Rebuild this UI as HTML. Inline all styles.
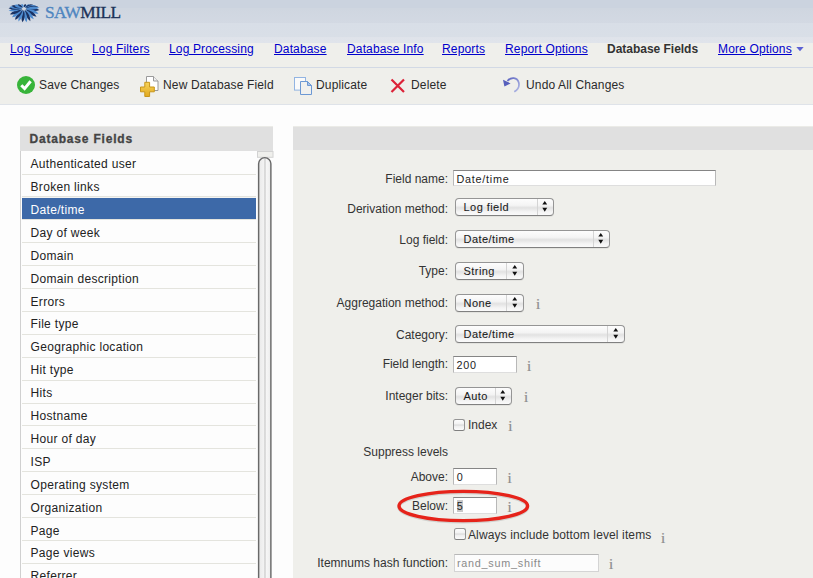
<!DOCTYPE html>
<html><head><meta charset="utf-8">
<style>
*{margin:0;padding:0;box-sizing:border-box}
html,body{width:813px;height:578px;overflow:hidden;background:#fdfdfd;font-family:"Liberation Sans",sans-serif;position:relative}
.abs{position:absolute}
#hdr{left:0;top:0;width:813px;height:43px;background:linear-gradient(#cbd3df 0,#cbd3df 8.5px,#cfd6e0 8.5px,#d3d9e3 23.4px,#d8dee7 23.4px,#d9dfe7 37.4px,#dfe3ea 37.4px,#e0e4eb 43px)}
#nav{left:0;top:43px;width:813px;height:25px;background:#efefeb;border-bottom:1px solid #d2d9e5}
#nav a{position:absolute;top:-1px;letter-spacing:0.15px;font-size:12px;color:#0000cc;text-decoration:underline;white-space:nowrap}
#nav b{position:absolute;top:-1px;letter-spacing:-0.02px;font-size:12px;color:#333;white-space:nowrap}
#tb{left:0;top:68px;width:813px;height:37px;background:#efefeb;border-bottom:1px solid #dfe3e9}
.tbt{position:absolute;top:10px;font-size:12px;color:#2a2a2a;letter-spacing:0.15px;white-space:nowrap}
#lp{left:20px;top:127px;width:253px;height:460px}
#lph{position:absolute;left:0;top:0;width:253px;height:24px;background:#e0e0e0;font-weight:bold;font-size:12px;color:#444;padding:5px 0 0 9.5px;letter-spacing:0.8px;-webkit-text-stroke:0.3px #444}
#list{position:absolute;left:0;top:24px;width:253px;height:440px;background:#fdfdfd;border-left:1px solid #d0d0d0}
.it{position:absolute;left:1px;width:234px;height:22.9px;border-top:1px solid #e4e4de;font-size:12px;color:#222;padding:5.6px 0 0 8.5px;letter-spacing:0.32px;white-space:nowrap;background-clip:padding-box}
.it.first{border-top-color:transparent}
.it.sel{background-color:#3d69a8;color:#fff;box-shadow:inset 0 0.9px 0 #f4f4f2}
#rp{left:293px;top:127px;width:520px;height:451px;background:#efefeb}
#rph{position:absolute;left:0;top:0;width:520px;height:23px;background:#e0e0e0}
.lbl{position:absolute;font-size:12px;color:#333;white-space:nowrap;text-align:right}
.inp{position:absolute;background:#fff;border:1px solid #dedede;border-top-color:#858585;border-left-color:#b8b8b8;border-right-color:#b8b8b8;font-size:10.8px;color:#222;padding:1.8px 0 0 2.5px;white-space:nowrap;letter-spacing:0.75px}
.sel2{position:absolute;height:18px;border:1px solid #959595;border-bottom-color:#808080;border-radius:4px;background:linear-gradient(#fdfdfd,#f4f4f4 40%,#e2e2e2 55%,#f4f4f4 80%,#fafafa);font-size:11px;color:#1a1a1a;padding:2.2px 0 0 7.5px;white-space:nowrap;letter-spacing:0.45px;-webkit-text-stroke:0.06px #1a1a1a;box-shadow:0 1px 0 #e2e2de}
.sel2 .dv{position:absolute;top:0;bottom:0;width:1px;background:#d4d4d4}
.sel2 svg{position:absolute;top:1px}
.info{position:absolute;font-family:"Liberation Serif",serif;font-size:15px;color:#8c8c8c;-webkit-text-stroke:0.2px #8c8c8c}
.cb{position:absolute;width:12px;height:12px;border:1px solid #959595;border-bottom-color:#7f7f7f;border-radius:2.5px;background:linear-gradient(#fdfdfd,#f2f2f2 40%,#d9d9d9 50%,#efefef 62%,#fbfbfb)}
</style></head><body>
<div id="hdr" class="abs">
<svg class="abs" style="left:6px;top:2px" width="36" height="24" viewBox="0 0 36 24">
<g><path d="M19.79 6.73Q27.97 10.53 33.42 7.98Q28.52 4.48 19.79 6.73Z" fill="#1b3262"/><path d="M19.68 7.06Q26.64 12.68 32.50 11.48Q28.62 6.93 19.68 7.06Z" fill="#4d8bcf"/><path d="M19.46 7.36Q24.69 14.43 30.58 14.66Q28.02 9.34 19.46 7.36Z" fill="#1b3262"/><path d="M19.14 7.61Q22.25 15.64 27.81 17.28Q26.78 11.58 19.14 7.61Z" fill="#4d8bcf"/><path d="M18.74 7.79Q19.51 16.20 24.37 19.18Q24.96 13.50 18.74 7.79Z" fill="#1b3262"/><path d="M18.29 7.88Q16.67 16.07 20.50 20.22Q22.65 15.00 18.29 7.88Z" fill="#4d8bcf"/><path d="M17.82 7.89Q13.95 15.27 16.45 20.33Q19.99 15.94 17.82 7.89Z" fill="#1b3262"/><path d="M17.36 7.82Q11.55 13.90 12.51 19.51Q17.16 16.23 17.36 7.82Z" fill="#4d8bcf"/><path d="M16.95 7.66Q9.60 12.06 8.95 17.80Q14.38 15.83 16.95 7.66Z" fill="#1b3262"/><path d="M16.61 7.42Q8.21 9.89 6.00 15.34Q11.85 14.77 16.61 7.42Z" fill="#4d8bcf"/><path d="M16.36 7.13Q7.46 7.51 3.87 12.27Q9.77 13.13 16.36 7.13Z" fill="#1b3262"/><path d="M16.22 6.81Q7.39 5.05 2.70 8.82Q8.29 11.06 16.22 6.81Z" fill="#4d8bcf"/><path d="M16.21 6.47Q7.83 3.22 2.58 6.13Q7.68 9.30 16.21 6.47Z" fill="#1b3262"/><path d="M16.32 6.14Q8.66 2.37 3.50 4.94Q8.09 8.42 16.32 6.14Z" fill="#4d8bcf"/><path d="M16.54 5.84Q10.18 1.62 5.42 3.86Q9.11 7.60 16.54 5.84Z" fill="#1b3262"/><path d="M16.86 5.59Q12.37 1.05 8.19 2.96Q10.60 6.87 16.86 5.59Z" fill="#4d8bcf"/><path d="M17.26 5.41Q14.77 1.67 11.63 2.32Q12.77 5.32 17.26 5.41Z" fill="#1b3262"/><path d="M17.71 5.32Q18.08 2.09 15.50 1.96Q14.60 4.38 17.71 5.32Z" fill="#4d8bcf"/><path d="M18.18 5.31Q20.96 3.99 19.55 1.92Q17.10 2.43 18.18 5.31Z" fill="#1b3262"/><path d="M18.64 5.38Q22.78 5.15 23.49 2.20Q20.50 1.67 18.64 5.38Z" fill="#4d8bcf"/><path d="M19.05 5.54Q25.00 6.71 27.05 2.78Q23.02 0.96 19.05 5.54Z" fill="#1b3262"/><path d="M19.39 5.78Q26.57 7.42 30.00 3.62Q25.36 1.46 19.39 5.78Z" fill="#4d8bcf"/><path d="M19.64 6.07Q27.72 8.22 32.13 4.67Q27.05 2.18 19.64 6.07Z" fill="#1b3262"/><path d="M19.78 6.39Q28.28 9.09 33.30 5.84Q28.04 3.01 19.78 6.39Z" fill="#4d8bcf"/></g>
</svg>
<div class="abs" style="left:45px;top:2px;font-family:'Liberation Serif',serif;font-size:17.7px;white-space:nowrap;letter-spacing:-0.6px;-webkit-text-stroke:0.35px;transform-origin:0 0;transform:scaleX(0.98)"><span style="color:#4f86c0">SAW</span><span style="color:#1d3358">MILL</span></div>
</div>
<div id="nav" class="abs">
<a style="left:10px">Log Source</a>
<a style="left:92px">Log Filters</a>
<a style="left:169px">Log Processing</a>
<a style="left:274px">Database</a>
<a style="left:347px">Database Info</a>
<a style="left:442px">Reports</a>
<a style="left:505px">Report Options</a>
<b style="left:607px">Database Fields</b>
<a style="left:718px">More Options</a>
<svg class="abs" style="left:795.5px;top:3.8px" width="9" height="5"><path d="M0.3 0H7.7L4 4.3Z" fill="#5c62d4"/></svg>
</div>
<div id="tb" class="abs">
<svg class="abs" style="left:16px;top:7px" width="20" height="20" viewBox="0 0 20 20"><circle cx="10" cy="10" r="9" fill="#38b43a"/><path d="M5.3 10.2L8.6 13.6L14.6 6.2" stroke="#fff" stroke-width="3" fill="none" stroke-linecap="butt" stroke-linejoin="miter"/></svg>
<span class="tbt" style="left:39px">Save Changes</span>
<svg class="abs" style="left:139px;top:7px" width="22" height="22" viewBox="0 0 22 22"><path d="M7.5 1.5H14.5L19 6V15.5H7.5Z" fill="#fff" stroke="#9a9a9a" stroke-width="1"/><path d="M14.5 1.5V6H19" fill="#eee" stroke="#9a9a9a"/><defs><linearGradient id="pg" x1="0" y1="0" x2="0" y2="1"><stop offset="0" stop-color="#f7d35a"/><stop offset="1" stop-color="#e2a91e"/></linearGradient></defs><path d="M5.8 7.3H10.6V12H15.3V16.8H10.6V21.5H5.8V16.8H1.5V12H5.8Z" fill="url(#pg)" stroke="#c8961a" stroke-width="1"/></svg>
<span class="tbt" style="left:163px">New Database Field</span>
<svg class="abs" style="left:292px;top:7px" width="22" height="22" viewBox="0 0 22 22"><rect x="2.5" y="2.5" width="11" height="12.6" fill="#fafafa" stroke="#92b4e2"/><path d="M8.5 6.5H15.5L19.5 10.5V19.5H8.5Z" fill="#f0f0ee" stroke="#6c98d4"/><path d="M15.5 6.5V10.5H19.5Z" fill="#a8c2e8" stroke="#6c98d4"/></svg>
<span class="tbt" style="left:316px">Duplicate</span>
<svg class="abs" style="left:389px;top:9px" width="18" height="18" viewBox="0 0 18 18"><path d="M2.5 2.5L15 15M15 2.5L2.5 15" stroke="#dc2238" stroke-width="2.2"/></svg>
<span class="tbt" style="left:411px">Delete</span>
<svg class="abs" style="left:500px;top:7px" width="22" height="22" viewBox="0 0 22 22"><defs><linearGradient id="ug" x1="0" y1="0" x2="1" y2="1"><stop offset="0" stop-color="#5a62c0"/><stop offset="1" stop-color="#b4bce6"/></linearGradient></defs><path d="M7.5 6C10.5 1.8 17.5 1.8 18.8 7.8C19.6 11.6 17.5 15 14.3 16.8" fill="none" stroke="url(#ug)" stroke-width="1.7"/><path d="M3 4.8L4.4 11.6L10.6 8.4Z" fill="#5760bc"/></svg>
<span class="tbt" style="left:526px">Undo All Changes</span>
</div>

<div class="abs" style="left:20px;top:126px;width:253px;height:1px;background:#ebebe7"></div><div class="abs" style="left:293px;top:126px;width:520px;height:1px;background:#ebebe7"></div>
<div id="lp" class="abs">
<div id="lph">Database Fields</div>
<div id="list"><div class="it first" style="top:-0.40px">Authenticated user</div><div class="it" style="top:22.50px">Broken links</div><div class="it sel" style="top:45.40px">Date/time</div><div class="it" style="top:68.30px">Day of week</div><div class="it" style="top:91.20px">Domain</div><div class="it" style="top:114.10px">Domain description</div><div class="it" style="top:137.00px">Errors</div><div class="it" style="top:159.90px">File type</div><div class="it" style="top:182.80px">Geographic location</div><div class="it" style="top:205.70px">Hit type</div><div class="it" style="top:228.60px">Hits</div><div class="it" style="top:251.50px">Hostname</div><div class="it" style="top:274.40px">Hour of day</div><div class="it" style="top:297.30px">ISP</div><div class="it" style="top:320.20px">Operating system</div><div class="it" style="top:343.10px">Organization</div><div class="it" style="top:366.00px">Page</div><div class="it" style="top:388.90px">Page views</div><div class="it" style="top:411.80px">Referrer</div><svg style="position:absolute;left:236px;top:0" width="17" height="440" viewBox="0 0 17 440"><defs><linearGradient id="th" x1="0" y1="0" x2="1" y2="0"><stop offset="0" stop-color="#c8c8c8"/><stop offset="0.12" stop-color="#ececec"/><stop offset="0.4" stop-color="#f2f2f2"/><stop offset="0.45" stop-color="#d9d9d9"/><stop offset="0.58" stop-color="#dcdcdc"/><stop offset="0.62" stop-color="#f6f6f6"/><stop offset="0.88" stop-color="#f0f0f0"/><stop offset="1" stop-color="#c4c4c4"/></linearGradient></defs><rect x="0" y="0" width="17" height="440" fill="#fdfdfd"/><rect x="0.5" y="0.5" width="15.5" height="5.8" fill="#efefec" stroke="#d2d2d2" stroke-width="1"/><path d="M1.6 440V12.8A6.15 6.15 0 0 1 13.9 12.8V440" fill="url(#th)" stroke="#696969" stroke-width="1.4"/></svg></div>
</div>

<div id="rp" class="abs">
<div id="rph"></div><div class="lbl" style="right:365.0px;top:45.2px">Field name:</div>
<div class="inp" style="left:160.0px;top:43.0px;width:263.0px;height:16.0px;color:#222">Date/time</div>
<div class="lbl" style="right:365.0px;top:74.5px">Derivation method:</div>
<div class="sel2" style="left:162.0px;top:70.8px;width:99.0px">Log field<div class="dv" style="left:80.5px"></div><svg style="left:86.2px" width="6" height="13" viewBox="0 0 6 13"><path d="M0.3 4.6L2.75 0.9L5.2 4.6ZM0.3 7.8L2.75 11.8L5.2 7.8Z" fill="#111"/></svg></div>
<div class="lbl" style="right:365.0px;top:105.5px">Log field:</div>
<div class="sel2" style="left:162.0px;top:103.2px;width:155.0px">Date/time<div class="dv" style="left:136.5px"></div><svg style="left:142.2px" width="6" height="13" viewBox="0 0 6 13"><path d="M0.3 4.6L2.75 0.9L5.2 4.6ZM0.3 7.8L2.75 11.8L5.2 7.8Z" fill="#111"/></svg></div>
<div class="lbl" style="right:365.0px;top:136.8px">Type:</div>
<div class="sel2" style="left:162.0px;top:134.5px;width:69.0px">String<div class="dv" style="left:50.0px"></div><svg style="left:55.7px" width="6" height="13" viewBox="0 0 6 13"><path d="M0.3 4.6L2.75 0.9L5.2 4.6ZM0.3 7.8L2.75 11.8L5.2 7.8Z" fill="#111"/></svg></div>
<div class="lbl" style="right:365.0px;top:168.6px">Aggregation method:</div>
<div class="sel2" style="left:162.0px;top:166.5px;width:69.0px">None<div class="dv" style="left:50.0px"></div><svg style="left:55.7px" width="6" height="13" viewBox="0 0 6 13"><path d="M0.3 4.6L2.75 0.9L5.2 4.6ZM0.3 7.8L2.75 11.8L5.2 7.8Z" fill="#111"/></svg></div>
<div class="info" style="left:243.0px;top:169.0px">i</div>
<div class="lbl" style="right:365.0px;top:200.6px">Category:</div>
<div class="sel2" style="left:162.0px;top:198.3px;width:170.0px">Date/time<div class="dv" style="left:151.0px"></div><svg style="left:156.7px" width="6" height="13" viewBox="0 0 6 13"><path d="M0.3 4.6L2.75 0.9L5.2 4.6ZM0.3 7.8L2.75 11.8L5.2 7.8Z" fill="#111"/></svg></div>
<div class="lbl" style="right:365.0px;top:230.3px">Field length:</div>
<div class="inp" style="left:160.0px;top:229.2px;width:64.0px;height:16.4px;color:#222">200</div>
<div class="info" style="left:234.0px;top:231.0px">i</div>
<div class="lbl" style="right:365.0px;top:261.6px">Integer bits:</div>
<div class="sel2" style="left:162.0px;top:260.0px;width:57.0px">Auto<div class="dv" style="left:38.5px"></div><svg style="left:44.2px" width="6" height="13" viewBox="0 0 6 13"><path d="M0.3 4.6L2.75 0.9L5.2 4.6ZM0.3 7.8L2.75 11.8L5.2 7.8Z" fill="#111"/></svg></div>
<div class="info" style="left:231.0px;top:262.0px">i</div>
<div class="cb" style="left:160.0px;top:292.0px"></div>
<div class="lbl" style="left:175px;top:290.5px">Index</div>
<div class="info" style="left:215.3px;top:291.0px">i</div>
<div class="lbl" style="right:365.0px;top:317.5px">Suppress levels</div>
<div class="lbl" style="right:365.0px;top:342.8px">Above:</div>
<div class="inp" style="left:160.2px;top:341.2px;width:43.8px;height:16.4px;color:#222">0</div>
<div class="info" style="left:214.5px;top:343.0px">i</div>
<div class="lbl" style="right:365.0px;top:372.0px">Below:</div>
<div class="inp" style="left:160.2px;top:370.2px;width:43.8px;height:16.4px;color:#222"><span style="background:#c8c8c8">5</span></div>
<div class="info" style="left:214.5px;top:372.0px">i</div>
<div class="cb" style="left:160.5px;top:401.4px"></div>
<div class="lbl" style="left:175px;top:400.5px;letter-spacing:0.12px">Always include bottom level items</div>
<div class="info" style="left:368.0px;top:403.0px">i</div>
<div class="lbl" style="right:365.0px;top:429.3px">Itemnums hash function:</div>
<div class="inp" style="border-color:#d4d4d4;border-top-color:#b8b8b8;background:#fcfcfc;left:160.5px;top:427.0px;width:145.0px;height:17.5px;color:#8a8a8a">rand_sum_shift</div>
<div class="info" style="left:316.0px;top:429.0px">i</div>
<svg style="position:absolute;left:103px;top:361px" width="135" height="37"><ellipse cx="67.3" cy="19.2" rx="64.3" ry="14.6" fill="none" stroke="rgba(0,0,0,0.12)" stroke-width="3.4"/><ellipse cx="67.3" cy="18" rx="64.3" ry="14.6" fill="none" stroke="#e6231a" stroke-width="3.4"/></svg>
</div>
</body></html>
